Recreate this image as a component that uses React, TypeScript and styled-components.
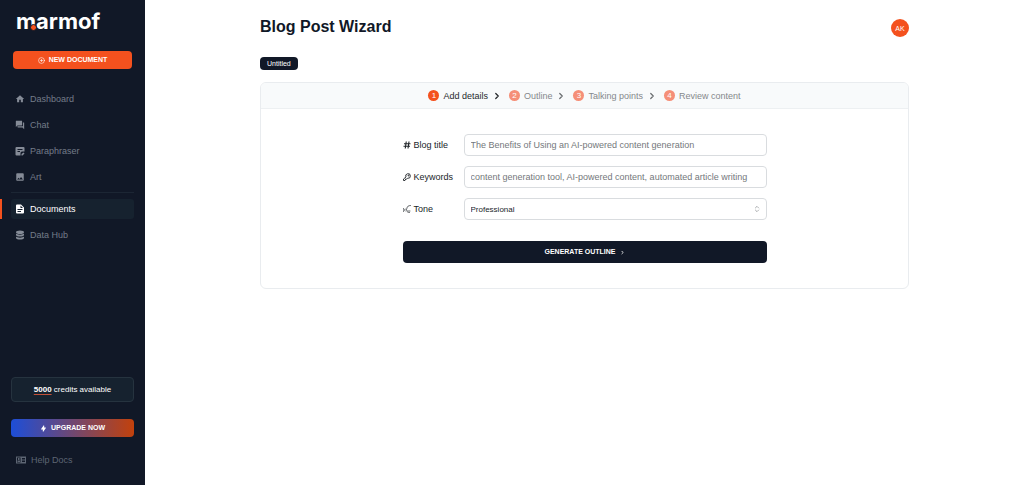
import React from "react";
import styled, { createGlobalStyle } from "styled-components";
import { MdHome, MdForum, MdImage } from "react-icons/md";
import { HiLightningBolt } from "react-icons/hi";
import { ChevronRight, ChevronsUpDown, CirclePlus } from "lucide-react";

const GlobalStyle = createGlobalStyle`
  *, *::before, *::after { box-sizing: border-box; }
  body { margin: 0; background: #fff; }
  body, button, input, select { font-family: "Liberation Sans", Arial, sans-serif; }
  svg { display: block; flex: none; }
`;

const Page = styled.div`
  display: flex;
  min-height: 100vh;
  font-size: 9px;
  line-height: 12px;
  color: #111827;
`;

const Sidebar = styled.aside`
  display: flex;
  flex-direction: column;
  flex: none;
  width: 145px;
  padding: 8px 11px 15px 0;
  background: #111827;
`;

const Logo = styled.a`
  position: relative;
  align-self: flex-start;
  margin-left: 16px;
  font: 700 22px/27px Inter, sans-serif;
  color: #fff;
  text-decoration: none;
`;

const LogoDot = styled.span`
  position: absolute;
  left: 14px;
  bottom: 4px;
  width: 7px;
  height: 7px;
  border: 1px solid #111827;
  border-radius: 50%;
  background: #f4511e;
`;

const SolidButton = styled.button`
  display: flex;
  align-items: center;
  justify-content: center;
  gap: 4px;
  height: 18px;
  padding: 0;
  border: 0;
  border-radius: 4px;
  color: #fff;
  font-size: 7px;
  font-weight: 700;
  line-height: 10px;
  text-transform: uppercase;
`;

const NewButton = styled(SolidButton)`
  margin: 16px 2px 20px 13px;
  background: #f4511e;
`;

const UpgradeButton = styled(SolidButton)`
  margin: 17px 0 13px 11px;
  background: linear-gradient(90deg, #1d4ed8, #c2410c);
`;

const Nav = styled.nav`
  display: flex;
  flex-direction: column;
  gap: 6px;
`;

const NavLink = styled.a<{ $active?: boolean }>`
  position: relative;
  display: flex;
  align-items: center;
  gap: 5px;
  height: 20px;
  margin-left: 11px;
  padding-left: 4px;
  border-radius: 3px;
  color: ${(p) => (p.$active ? "#fff" : "#747c89")};
  background: ${(p) => (p.$active ? "#16222f" : "transparent")};
  text-decoration: none;

  &::before {
    content: "";
    display: ${(p) => (p.$active ? "block" : "none")};
    position: absolute;
    left: -11px;
    width: 2px;
    height: 100%;
    background: #f4511e;
  }

  svg { color: ${(p) => (p.$active ? "#fff" : "#858b97")}; }
`;

const HelpLink = styled(NavLink)`
  padding-left: 5px;
  color: #5d6573;

  svg { color: #5d6573; }
`;

const Divider = styled.hr`
  width: calc(100% - 11px);
  height: 1px;
  margin: -1px 0 0 11px;
  border: 0;
  background: #1c2634;
`;

const SidebarFooter = styled.div`
  display: flex;
  flex-direction: column;
  margin-top: auto;
`;

const Credits = styled.div`
  margin-left: 11px;
  padding: 5px 0;
  border: 1px solid #26333f;
  border-radius: 4px;
  background: #16222f;
  color: #fff;
  font-size: 8px;
  line-height: 13px;
  text-align: center;

  b {
    text-decoration: underline #c2513a;
    text-underline-offset: 2px;
  }
`;

const Main = styled.main`
  flex: 1;
  min-width: 0;
  padding: 17px 20px;
`;

const Content = styled.div`
  max-width: 649px;
  margin: 0 auto;
`;

const Header = styled.header`
  display: flex;
  align-items: flex-end;
  justify-content: space-between;
  height: 20px;
`;

const Title = styled.h1`
  margin: 0;
  font-size: 16px;
  line-height: 20px;
`;

const Avatar = styled.button`
  width: 18px;
  height: 18px;
  padding: 0;
  border: 0;
  border-radius: 50%;
  background: #f4511e;
  color: #fff;
  font-size: 7px;
`;

const Tag = styled.div`
  width: fit-content;
  margin: 20px 0 12px;
  padding: 0 7px;
  border-radius: 4px;
  background: #111827;
  color: #fff;
  font-size: 7px;
  line-height: 13px;
`;

const Card = styled.section`
  border: 1px solid #e9ecef;
  border-radius: 6px;
  overflow: hidden;
`;

const Steps = styled.ol`
  display: flex;
  align-items: center;
  justify-content: center;
  gap: 7px;
  height: 26px;
  margin: 0;
  padding: 0;
  border-bottom: 1px solid #edf0f2;
  background: #f8fafb;
  list-style: none;
`;

const Step = styled.li<{ $current?: boolean }>`
  display: flex;
  align-items: center;
  gap: 4px;
  color: ${(p) => (p.$current ? "#272a2d" : "#85888b")};

  svg { color: ${(p) => (p.$current ? "#272a2d" : "#6c6f72")}; }
`;

const StepNumber = styled.span<{ $current?: boolean }>`
  width: 11px;
  height: 11px;
  border-radius: 50%;
  background: ${(p) => (p.$current ? "#f4511e" : "#f58f78")};
  color: #fff;
  font-size: 8px;
  line-height: 11px;
  text-align: center;
`;

const Form = styled.form`
  display: flex;
  flex-direction: column;
  gap: 10px;
  max-width: 364px;
  margin: 0 auto;
  padding: 25px 0;
`;

const Field = styled.div`
  display: flex;
  align-items: center;
`;

const Label = styled.label`
  display: flex;
  align-items: center;
  gap: 3px;
  flex: none;
  width: 61px;
  color: #202529;
`;

const TextInput = styled.input`
  flex: 1;
  min-width: 0;
  height: 22px;
  padding: 0 6px;
  border: 1px solid #d9dcdf;
  border-radius: 4px;
  background: #fff;
  font-size: 9px;

  &::placeholder { color: #74787b; opacity: 1; }
`;

const SelectWrap = styled.div`
  position: relative;
  flex: 1;

  svg { position: absolute; right: 6px; top: 7px; color: #85898c; pointer-events: none; }
`;

const Select = styled.select`
  display: block;
  appearance: none;
  width: 100%;
  height: 22px;
  padding: 0 6px;
  border: 1px solid #d9dcdf;
  border-radius: 4px;
  background: #fff;
  color: #202529;
  font-size: 8px;
`;

const SubmitButton = styled(SolidButton)`
  height: 22px;
  margin-top: 11px;
  background: #111827;
`;

const ParaphraseIcon = () => (
  <svg width="10" height="10" viewBox="0 0 20 20" fill="currentColor">
    <path fillRule="evenodd" d="M3 2h14a2 2 0 0 1 2 2v7h-5a3 3 0 0 0-3 3v5H3a2 2 0 0 1-2-2V4a2 2 0 0 1 2-2zm2 4v2h10V6zm0 4v2h5v-2z" />
    <path d="M13 19v-3l4-3 2 2-4 4z" />
  </svg>
);

const DocumentIcon = () => (
  <svg width="10" height="10" viewBox="0 0 20 20" fill="currentColor">
    <path fillRule="evenodd" d="M4 1h8l6 6v10a2 2 0 0 1-2 2H4a2 2 0 0 1-2-2V3a2 2 0 0 1 2-2zm7 2v5h5zM5 10v2h10v-2zm0 4v2h7v-2z" />
  </svg>
);

const DatabaseIcon = () => (
  <svg width="10" height="10" viewBox="0 0 20 20" fill="currentColor">
    <ellipse cx="10" cy="4.5" rx="8" ry="3.5" />
    <path d="M2 7c2 3 14 3 16 0v3c-1 4-15 4-16 0zM2 13c2 3 14 3 16 0v3c-1 4-15 4-16 0z" />
  </svg>
);

const HelpIcon = () => (
  <svg width="10" height="10" viewBox="0 0 20 20">
    <path fill="currentColor" fillRule="evenodd" d="M0 3h20v14H0zM2 5v10h7V5zM12 6v2h6V6zm0 3v2h6V9zm0 3v2h6v-2z" />
    <path fill="currentColor" d="M4 6h3v4H4zM3 11h5v3H3z" />
  </svg>
);

const HashIcon = () => (
  <svg width="8" height="8" viewBox="0 0 16 16" fill="none" stroke="currentColor" strokeWidth="2.2">
    <path d="M6.5 1 4.5 15M12 1l-2 14M2 5.5h13M1 10.5h13" />
  </svg>
);

const KeyIcon = () => (
  <svg width="8" height="8" viewBox="0 0 16 16" fill="none" stroke="currentColor" strokeWidth="1.8" strokeLinejoin="round">
    <path d="M6 8a4.600 4.600 0 1 1 3.500 2.500L7 12H5v2l-1 1H1v-3z" />
    <circle cx="11" cy="5" r="1" />
  </svg>
);

const ToneIcon = () => (
  <svg width="8" height="8" viewBox="0 0 16 16" fill="none" stroke="currentColor" strokeWidth="1.4" strokeLinecap="round">
    <path d="M15 1c-4 0-7 2-7 5 0 1-1 2-2 3l2 1v2c0 2 2 3 5 3" />
    <path d="M4 8c-1 1-1 3 0 4M1 7c-1 2-1 4 0 6M11 12h3" />
  </svg>
);

const steps = ["Add details", "Outline", "Talking points", "Review content"];

export default function App() {
  return (
    <Page>
      <GlobalStyle />
      <Sidebar>
        <Logo href="#">
          marmof
          <LogoDot />
        </Logo>
        <NewButton type="button">
          <CirclePlus size={7} />
          New document
        </NewButton>
        <Nav>
          <NavLink href="#"><MdHome size={10} />Dashboard</NavLink>
          <NavLink href="#"><MdForum size={10} />Chat</NavLink>
          <NavLink href="#"><ParaphraseIcon />Paraphraser</NavLink>
          <NavLink href="#"><MdImage size={10} />Art</NavLink>
          <Divider />
          <NavLink href="#" $active><DocumentIcon />Documents</NavLink>
          <NavLink href="#"><DatabaseIcon />Data Hub</NavLink>
        </Nav>
        <SidebarFooter>
          <Credits><b>5000</b> credits available</Credits>
          <UpgradeButton type="button">
            <HiLightningBolt size={7} />
            Upgrade now
          </UpgradeButton>
          <HelpLink href="#"><HelpIcon />Help Docs</HelpLink>
        </SidebarFooter>
      </Sidebar>
      <Main>
        <Content>
          <Header>
            <Title>Blog Post Wizard</Title>
            <Avatar type="button">AK</Avatar>
          </Header>
          <Tag>Untitled</Tag>
          <Card>
            <Steps>
              {steps.map((name, i) => (
                <Step key={name} $current={i === 0}>
                  <StepNumber $current={i === 0}>{i + 1}</StepNumber>
                  {name}
                  {i < steps.length - 1 && <ChevronRight size={10} strokeWidth={3} />}
                </Step>
              ))}
            </Steps>
            <Form>
              <Field>
                <Label htmlFor="title"><HashIcon />Blog title</Label>
                <TextInput id="title" placeholder="The Benefits of Using an AI-powered content generation" />
              </Field>
              <Field>
                <Label htmlFor="keywords"><KeyIcon />Keywords</Label>
                <TextInput id="keywords" placeholder="content generation tool, AI-powered content, automated article writing" />
              </Field>
              <Field>
                <Label htmlFor="tone"><ToneIcon />Tone</Label>
                <SelectWrap>
                  <Select id="tone" defaultValue="Professional">
                    <option>Professional</option>
                  </Select>
                  <ChevronsUpDown size={8} />
                </SelectWrap>
              </Field>
              <SubmitButton type="button">
                Generate outline
                <ChevronRight size={5} strokeWidth={4} />
              </SubmitButton>
            </Form>
          </Card>
        </Content>
      </Main>
    </Page>
  );
}
